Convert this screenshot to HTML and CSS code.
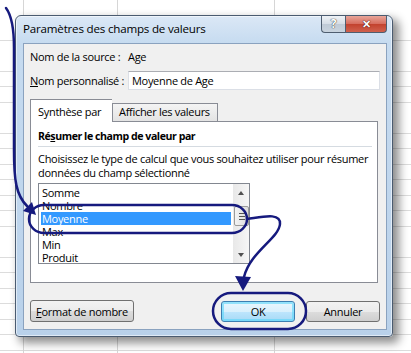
FILE: index.html
```html
<!DOCTYPE html>
<html lang="fr">
<head>
  <meta charset="UTF-8">
  <title>Paramètres des champs de valeurs</title>
  <link rel="stylesheet" href="styles.css">
</head>
<body>
  <div class="window">
    <div class="titlebar">
      <span class="title">Paramètres des champs de valeurs</span>
      <div class="caption-buttons">
        <span class="caption help">?</span>
        <span class="caption close">✕</span>
      </div>
    </div>

    <div class="client">
      <div class="fields">
        <span class="label">Nom de la source :</span>
        <span class="value">Age</span>
        <span class="label"><u>N</u>om personnalisé :</span>
        <div class="textbox">Moyenne de Age</div>
      </div>

      <div class="tabs">
        <span class="tab active">Synthèse par</span>
        <span class="tab">Afficher les valeurs</span>
      </div>

      <div class="panel">
        <div class="heading">Ré<u>s</u>umer le champ de valeur par</div>
        <div class="rule"></div>
        <p class="hint">Choisissez le type de calcul que vous souhaitez utiliser pour résumer<br>données du champ sélectionné</p>
        <div class="listbox">
          <ul class="items">
            <li>Somme</li>
            <li>Nombre</li>
            <li class="selected">Moyenne</li>
            <li>Max</li>
            <li>Min</li>
            <li>Produit</li>
          </ul>
          <div class="scrollbar">
            <span class="arrow up"></span>
            <div class="track"><span class="thumb"></span></div>
            <span class="arrow down"></span>
          </div>
        </div>
      </div>

      <div class="actions">
        <button class="btn wide"><u>F</u>ormat de nombre</button>
        <div class="right">
          <button class="btn default">OK</button>
          <button class="btn">Annuler</button>
        </div>
      </div>
    </div>
  </div>

  <!-- hand-drawn annotations over the dialog -->
  <svg class="marks" width="411" height="353" viewBox="0 0 411 353">
    <g fill="none" stroke="#161a7e" stroke-width="2.5" stroke-linecap="round">
      <path d="M6,8 C12,16 14,28 14,48 L14,150 C14,180 16,195 27,206"/>
      <rect x="29" y="205" width="218" height="28" rx="15" ry="14"/>
      <path d="M247,219 C262,217 281,212 280,224 C279,238 250,252 244,277"/>
      <rect x="213" y="293" width="93" height="36" rx="18" ry="18"/>
    </g>
    <g fill="#161a7e">
      <polygon points="36,215 23,211 32,202"/>
      <polygon points="243,291 235,276 251,277"/>
    </g>
  </svg>
</body>
</html>
```

FILE: styles.css
```css
/* Spreadsheet behind the dialog */
body {
  margin: 0;
  width: 411px;
  height: 353px;
  overflow: hidden;
  position: relative;
  font-family: "Open Sans", "Noto Sans", sans-serif;
  font-size: 11px;
  letter-spacing: -0.3px;
  color: #000;
  background-color: #fff;
  background-image:
    linear-gradient(#d6d6d6, #d6d6d6),
    linear-gradient(#d6d6d6, #d6d6d6),
    linear-gradient(#d6d6d6, #d6d6d6),
    repeating-linear-gradient(to bottom, transparent 0, transparent 14.5px, #dcdcdc 14.5px, #dcdcdc 15.5px);
  background-size: 1px 100%, 1px 100%, 1px 100%, 100% 100%;
  background-position: 23px 0, 117px 0, 274px 0, 0 10px;
  background-repeat: no-repeat;
}

/* Vista window frame */
.window {
  box-sizing: border-box;
  width: 378px;
  height: 322px;
  margin: 15px 0 0 15px;
  padding: 0 5px 6px 7px;
  border: 1px solid #4a5b70;
  border-radius: 6px 6px 4px 4px;
  background: linear-gradient(to bottom, #dbe8f6 0, #c6dbf0 27px, #b9d1ea 100%);
  box-shadow: inset 0 0 0 1px rgba(255, 255, 255, 0.55), 5px 5px 10px 1px rgba(0, 0, 0, 0.45);
  display: flex;
  flex-direction: column;
}

.titlebar {
  height: 27px;
  display: flex;
  align-items: flex-start;
}
.title {
  font-size: 11.6px;
  letter-spacing: -0.2px;
  line-height: 16px;
  padding-top: 5px;
}
.caption-buttons {
  margin-left: auto;
  display: flex;
}
.caption {
  box-sizing: border-box;
  height: 17px;
  border: 1px solid #4f5e70;
  border-top: none;
  text-align: center;
  line-height: 15px;
  font-weight: bold;
  letter-spacing: 0;
  color: #fff;
}
.help {
  width: 24px;
  border-radius: 0 0 0 4px;
  border-right: none;
  background: linear-gradient(to bottom, #eef2f6 0, #d5dde6 50%, #bfcad6 50%, #c9d4df 100%);
  font-size: 12px;
  text-shadow: 0 0 1px #333, 0 0 1px #333;
}
.close {
  width: 42px;
  border-radius: 0 0 4px 0;
  background: linear-gradient(to bottom, #e8a599 0, #d66b5c 50%, #c2412d 50%, #d0614e 100%);
  font-size: 11px;
  text-shadow: 0 0 1px #400, 0 0 1px #400;
}

/* Dialog body */
.client {
  box-sizing: border-box;
  height: 287px;
  background: #f0f0f0;
  border: 1px solid #8aa2bf;
  padding: 6px 6px 7px 6px;
  display: flex;
  flex-direction: column;
}

.fields {
  display: grid;
  grid-template-columns: 98px 1fr;
  row-gap: 7px;
  align-items: center;
  line-height: 14px;
}
.label {
  white-space: nowrap;
}
.textbox {
  box-sizing: border-box;
  height: 19px;
  line-height: 17px;
  padding-left: 3px;
  background: #fff;
  border: 1px solid #dbdfe6;
  border-top-color: #abadb3;
}

.tabs {
  margin-top: 9px;
  height: 22px;
  display: flex;
  align-items: flex-end;
  position: relative;
  z-index: 1;
}
.tab {
  box-sizing: border-box;
  height: 18px;
  width: 106px;
  padding: 1px 0 0 6px;
  line-height: 14px;
  white-space: nowrap;
  border: 1px solid #898c95;
  border-bottom: none;
  background: linear-gradient(to bottom, #f4f4f4, #e3e3e3);
}
.tab.active {
  height: 23px;
  width: 82px;
  margin-bottom: -1px;
  padding: 5px 0 0 7px;
  border-right: none;
  background: #fff;
}

.panel {
  box-sizing: border-box;
  height: 162px;
  margin-right: 2px;
  padding: 7px 5px 0 7px;
  background: #fff;
  border: 1px solid #898c95;
}
.heading {
  font-weight: bold;
  font-size: 10.6px;
  letter-spacing: -0.45px;
  line-height: 14px;
}
.rule {
  height: 1px;
  margin-top: 3px;
  background: #d5dbe1;
}
.hint {
  margin: 5px 0 0;
  line-height: 14px;
  white-space: nowrap;
}

.listbox {
  box-sizing: border-box;
  width: 212px;
  height: 81px;
  margin-top: 3px;
  border: 1px solid #828790;
  display: flex;
}
.items {
  flex: 1;
  list-style: none;
  margin: 0;
  padding: 2px 2px 0 2px;
  overflow: hidden;
}
.items li {
  line-height: 13px;
  height: 13px;
  padding-left: 1px;
}
.items .selected {
  background: #3399ff;
  color: #fff;
}

.scrollbar {
  width: 16px;
  display: flex;
  flex-direction: column;
  background: linear-gradient(to right, #e8e8e8, #f6f6f6);
}
.arrow {
  height: 17px;
  display: flex;
  align-items: center;
  justify-content: center;
}
.arrow::before {
  content: "";
  border-left: 3.5px solid transparent;
  border-right: 3.5px solid transparent;
}
.arrow.up::before {
  border-bottom: 4px solid #505050;
}
.arrow.down::before {
  border-top: 4px solid #505050;
}
.track {
  flex: 1;
}
.thumb {
  display: block;
  box-sizing: border-box;
  height: 20px;
  margin: 5px 0 0 1px;
  width: 15px;
  border: 1px solid #9b9b9b;
  border-radius: 2px;
  background:
    linear-gradient(#555, #555) 4px 6px / 6px 1px no-repeat,
    linear-gradient(#555, #555) 4px 9px / 6px 1px no-repeat,
    linear-gradient(#555, #555) 4px 12px / 6px 1px no-repeat,
    linear-gradient(to right, #f4f4f4, #dcdcdc);
}

/* Bottom buttons */
.actions {
  margin-top: 17px;
  display: flex;
  justify-content: space-between;
  align-items: flex-end;
}
.right {
  display: flex;
  gap: 11px;
}
.btn {
  box-sizing: border-box;
  width: 74px;
  height: 21px;
  padding: 0;
  font-family: inherit;
  font-size: 11px;
  letter-spacing: -0.3px;
  color: #000;
  border: 1px solid #707070;
  border-radius: 3px;
  background: linear-gradient(to bottom, #f2f2f2 0, #ebebeb 50%, #dddddd 50%, #cfcfcf 100%);
}
.btn.wide {
  width: 104px;
  height: 22px;
}
.btn.default {
  border-color: #3c7fb1;
  box-shadow: inset 0 0 0 2px rgba(88, 214, 250, 0.6);
  background: linear-gradient(to bottom, #eaf6fd 0, #d9f0fc 50%, #bee6fd 50%, #a7d9f5 100%);
}

.marks {
  position: absolute;
  left: 0;
  top: 0;
  pointer-events: none;
}
```
